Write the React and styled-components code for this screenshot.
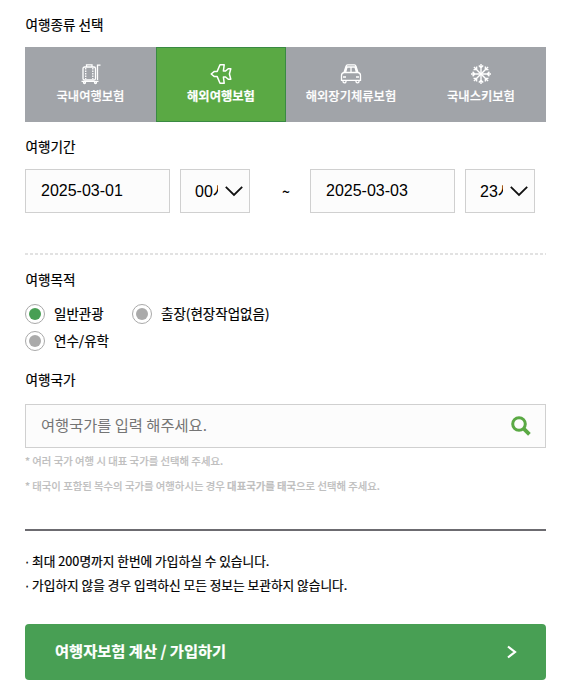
import React from "react";
import styled, { createGlobalStyle } from "styled-components";

const GlobalStyle = createGlobalStyle`
  * {
    box-sizing: border-box;
  }

  body {
    margin: 0;
    background: #fff;
    color: #000;
    font-family: "Noto Sans CJK KR", sans-serif;
  }
`;

/* Page */
const Page = styled.main`
  width: 578px;
  height: 696px;
  padding: 15px 32px 0 25px;
  overflow: hidden;
`;

/* Section title */
const Title = styled.h2`
  height: 20px;
  margin: 0;
  padding-left: 0.5px;
  font-size: 13.6px;
  line-height: 18px;
  font-weight: 400;
  -webkit-text-stroke: 0.2px;
  white-space: nowrap;
`;

/* Insurance tabs */
const Tabs = styled.div`
  display: grid;
  grid-template-columns: 131px 130px 130px 130px;
  height: 75px;
  margin: 12px 0 15px;
  background: #a1a4a9;
`;

const Tab = styled.button`
  display: flex;
  flex-direction: column;
  align-items: center;
  padding: 15px 0 0;
  border: 1px solid ${props => (props.$active ? "#3a8a43" : "transparent")};
  background: ${props => (props.$active ? "#5aa944" : "transparent")};
  color: #fff;
  font-family: inherit;
  font-size: 12.3px;
  line-height: 18px;
  font-weight: ${props => (props.$active ? 700 : 500)};
  -webkit-text-stroke: 0.2px;
  white-space: nowrap;

  svg {
    display: block;
    margin-bottom: 2px;
  }
`;

/* Travel period */
const Period = styled.div`
  display: flex;
  height: 44px;
  margin-top: 12px;
`;

const Field = styled.div`
  display: flex;
  align-items: center;
  width: 145px;
  height: 44px;
  padding-left: 15px;
  border: 1px solid #d0d0d0;
  background: #fcfcfc;
  font-family: "Liberation Sans", "Noto Sans CJK KR", sans-serif;
  font-size: 16px;
  line-height: 22px;
`;

const HourField = styled(Field)`
  width: 70px;
  margin-left: 10px;
  padding-left: 14px;
`;

const Hour = styled.span`
  width: 23px;
  margin-right: 7px;
  padding-top: 1px;
  overflow: hidden;
  white-space: nowrap;
`;

const Tilde = styled.span`
  width: 60px;
  padding-left: 12px;
  text-align: center;
  font-size: 14px;
  line-height: 44px;
  font-weight: 500;
`;

/* Dashed divider */
const Dashes = styled.div`
  height: 2px;
  margin: 40px 0 15px;
  background: repeating-linear-gradient(90deg, #e2e2e2 0 3px, transparent 3px 5px);
`;

/* Travel purpose */
const Radios = styled.div`
  display: grid;
  grid-template-columns: 107px 200px;
  grid-auto-rows: 27px;
  margin: 10px 0 16px;
`;

const Radio = styled.label`
  display: flex;
  align-items: center;
  font-size: 13.5px;
  -webkit-text-stroke: 0.2px;
  white-space: nowrap;
`;

const RadioText = styled.span`
  padding-bottom: 2px;
  line-height: 20px;
`;

const Dot = styled.span`
  display: flex;
  align-items: center;
  justify-content: center;
  width: 20px;
  height: 20px;
  margin-right: 9px;
  border: 1px solid #a9a9a9;
  border-radius: 50%;

  &::before {
    content: "";
    width: 12px;
    height: 12px;
    border-radius: 50%;
    background: ${props => (props.$checked ? "#489f54" : "#aaa")};
  }
`;

/* Country search */
const Search = styled.div`
  display: flex;
  align-items: center;
  justify-content: space-between;
  height: 44px;
  margin: 14px 0 4px;
  padding: 0 14px 0 15px;
  border: 1px solid #d0d0d0;
  background: #fcfcfc;
`;

const Placeholder = styled.span`
  padding-bottom: 5px;
  color: #757575;
  font-size: 15.3px;
  line-height: 24px;
`;

const Hint = styled.p`
  height: 25px;
  margin: 0;
  color: #bfbfbf;
  font-size: 10.35px;
  line-height: 18px;
  font-weight: 500;
  -webkit-text-stroke: 0.15px;
  white-space: nowrap;
`;

/* Notices */
const Notices = styled.ul`
  margin: 27px 0 0;
  padding: 18px 0 0;
  border-top: 2px solid #6c6b70;
  list-style: none;
`;

const Notice = styled.li`
  height: 24px;
  font-size: 12.7px;
  line-height: 23px;
  -webkit-text-stroke: 0.2px;
  white-space: nowrap;
`;

const Bullet = styled.span`
  font-family: "Liberation Sans", sans-serif;
`;

const Submit = styled.button`
  display: flex;
  align-items: center;
  justify-content: space-between;
  width: 521px;
  height: 56px;
  margin-top: 27px;
  padding: 0 28px 5px 30px;
  border: 0;
  border-radius: 4px;
  background: #489f54;
  color: #fff;
  font-family: inherit;
  font-size: 15.3px;
  line-height: 24px;
  font-weight: 700;
  -webkit-text-stroke: 0.2px;

  svg {
    margin-top: 5px;
  }
`;

const iconProps = {
  width: 22,
  height: 22,
  viewBox: "0 0 22 22",
  fill: "none",
  stroke: "currentColor",
  strokeWidth: 1.3,
};

function LuggageIcon() {
  return (
    <svg {...iconProps}>
      <rect x="3" y="4" width="12.5" height="13" rx="1.5" />
      <path d="M6.5 4V1.8h5.5V4M17.5 17V2.2h3M1.5 18.3h17" />
      <path d="M5.7 5v11M12.8 5v11" strokeDasharray="1.5 1" />
      <circle cx="4.5" cy="19.6" r="1" />
      <circle cx="15.5" cy="19.6" r="1" />
    </svg>
  );
}

function PlaneIcon() {
  return (
    <svg {...iconProps} strokeWidth="1.5" strokeLinejoin="round">
      <path d="M1.2 11l3.2-2.6h2.8L10 1.7h4.2L13.4 8h2.2l2.6-2.2h2.6L19.4 11l1.4 5.2h-2.6L15.6 14h-2.2l.8 6.3H10l-2.8-6.7H4.4z" />
    </svg>
  );
}

function CarIcon() {
  return (
    <svg {...iconProps}>
      <path d="M4 9.5L6.1 3Q6.4 1.8 7.6 1.8h6.8q1.2 0 1.5 1.2L18 9.5M5.5 9.5L7 4h8l1.5 5.5M11 4v5.5M4 9.5h14q2.5.5 2.5 3v4.8h-19v-4.8q0-2.5 2.5-3z" />
      <path d="M3 17.3v1.2q0 1.4 1.5 1.4T6 18.5v-1.2M16 17.3v1.2q0 1.4 1.5 1.4t1.5-1.4v-1.2M3 14h3M16 14h3" />
    </svg>
  );
}

function SnowIcon() {
  return (
    <svg {...iconProps} strokeWidth="1.4">
      {[0, 45, 90, 135, 180, 225, 270, 315].map(angle => (
        <path
          key={angle}
          d="M11 11V1M8.8 2.6L11 4.8l2.2-2.2"
          transform={`rotate(${angle} 11 11)`}
        />
      ))}
    </svg>
  );
}

function Chevron() {
  return (
    <svg width="18" height="12" viewBox="0 0 18 12" fill="none" stroke="#111" strokeWidth="1.8">
      <path d="M.8 1.8L9 10l8.2-8.2" />
    </svg>
  );
}

function SearchIcon() {
  return (
    <svg width="20" height="20" viewBox="0 0 20 20" fill="none" stroke="#5aa944">
      <circle cx="8" cy="8" r="6.3" strokeWidth="3" />
      <path d="M12.2 12.2l6.2 6.2" strokeWidth="3.8" />
    </svg>
  );
}

const tabs = [
  { text: "국내여행보험", Icon: LuggageIcon },
  { text: "해외여행보험", Icon: PlaneIcon, active: true },
  { text: "해외장기체류보험", Icon: CarIcon },
  { text: "국내스키보험", Icon: SnowIcon },
];

const purposes = ["일반관광", "출장(현장작업없음)", "연수/유학"];

const notices = [
  "최대 200명까지 한번에 가입하실 수 있습니다.",
  "가입하지 않을 경우 입력하신 모든 정보는 보관하지 않습니다.",
];

export default function App() {
  return (
    <Page>
      <GlobalStyle />

      <Title>여행종류 선택</Title>
      <Tabs>
        {tabs.map(({ text, Icon, active }) => (
          <Tab key={text} $active={active}>
            <Icon />
            {text}
          </Tab>
        ))}
      </Tabs>

      <Title>여행기간</Title>
      <Period>
        <Field>2025-03-01</Field>
        <HourField>
          <Hour>00시</Hour>
          <Chevron />
        </HourField>
        <Tilde>~</Tilde>
        <Field>2025-03-03</Field>
        <HourField>
          <Hour>23시</Hour>
          <Chevron />
        </HourField>
      </Period>
      <Dashes />

      <Title>여행목적</Title>
      <Radios>
        {purposes.map((text, i) => (
          <Radio key={text}>
            <Dot $checked={i === 0} />
            <RadioText>{text}</RadioText>
          </Radio>
        ))}
      </Radios>

      <Title>여행국가</Title>
      <Search>
        <Placeholder>여행국가를 입력 해주세요.</Placeholder>
        <SearchIcon />
      </Search>
      <Hint>* 여러 국가 여행 시 대표 국가를 선택해 주세요.</Hint>
      <Hint>* 태국이 포함된 복수의 국가를 여행하시는 경우 <b>대표국가를 태국</b>으로 선택해 주세요.</Hint>

      <Notices>
        {notices.map(text => (
          <Notice key={text}><Bullet>·</Bullet> {text}</Notice>
        ))}
      </Notices>

      <Submit>
        여행자보험 계산 / 가입하기
        <svg width="12" height="14" viewBox="0 0 12 14" fill="none" stroke="#fff" strokeWidth="2.2">
          <path d="M2 1.5L9 7l-7 5.5" />
        </svg>
      </Submit>
    </Page>
  );
}
